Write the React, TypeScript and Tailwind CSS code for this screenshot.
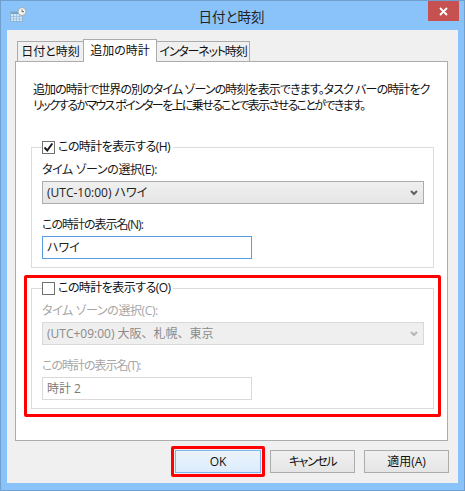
import React from 'react';

const font = "font-['Open_Sans','Noto_Sans_CJK_JP',sans-serif] [font-feature-settings:'palt']";

function CalendarClockIcon() {
  return (
    <svg width="17" height="16" viewBox="0 0 17 16" className="shrink-0">
      <rect x="0.5" y="4.5" width="12" height="10" fill="#d3e6f5" stroke="#8fb4d2" />
      <rect x="1" y="5" width="11" height="2" fill="#6fa8d6" />
      <path d="M3.5 7v7M6.5 7v7M9.5 7v7M1 9.5h11M1 12h11" stroke="#9fc3e0" strokeWidth="1" />
      <circle cx="12" cy="4.5" r="4" fill="#f2f4f6" stroke="#a3a9ae" />
      <path d="M12 2.5v2.2h2" stroke="#666" strokeWidth="1" fill="none" />
    </svg>
  );
}

function Chevron({ color }: { color: string }) {
  return (
    <svg width="8" height="6" viewBox="0 0 8 6" className="shrink-0">
      <path d="M1 1l3 3 3-3" stroke={color} strokeWidth="2" fill="none" />
    </svg>
  );
}

function ClockGroup(props: {
  checked?: boolean;
  disabled?: boolean;
  title: string;
  zoneLabel: string;
  zone: string;
  nameLabel: string;
  name: string;
}) {
  const { checked, disabled } = props;
  const labelColor = disabled ? 'text-[#a6a6a6]' : 'text-[#1a1a1a]';

  return (
    <fieldset className="border border-[#dcdcdc] h-full px-[10px] min-w-0">
      <legend className="flex items-center h-[14px] pr-[3px] bg-white">
        <span className="w-[13px] h-[13px] border border-[#707070] bg-white flex items-center justify-center">
          {checked && (
            <svg width="11" height="11" viewBox="0 0 11 11">
              <path d="M1.5 5.5l2.8 3 5-7" stroke="#1a1a1a" strokeWidth="2" fill="none" />
            </svg>
          )}
        </span>
        <span className="ml-[3px] text-[12px] tracking-[-0.55px] text-[#111] leading-[14px] whitespace-nowrap">{props.title}</span>
      </legend>
      <div className={`mt-[8px] text-[12px] tracking-[-0.4px] leading-[16px] whitespace-nowrap ${labelColor}`}>{props.zoneLabel}</div>
      <div
        className={`mt-[3px] h-[23px] w-[382px] flex items-center justify-between pl-[4px] pr-[5px] border text-[12px] ${
          disabled
            ? 'border-[#d9d9d9] bg-[#efefef] text-[#8a8a8a] [font-feature-settings:normal]'
            : 'border-[#acacac] bg-gradient-to-b from-[#f0f0f0] to-[#e5e5e5] text-[#222]'
        }`}
      >
        <span>{props.zone}</span>
        <Chevron color={disabled ? '#b5b5b5' : '#606060'} />
      </div>
      <div className={`mt-[13px] text-[12px] tracking-[-1px] leading-[16px] whitespace-nowrap ${labelColor}`}>{props.nameLabel}</div>
      <div
        className={`mt-[3px] h-[23px] w-[210px] flex items-center pl-[4px] border bg-white text-[12px] ${
          disabled ? 'border-[#d9d9d9] text-[#7a7a7a]' : 'border-[#569de5] text-[#222]'
        }`}
      >
        {props.name}
      </div>
    </fieldset>
  );
}

function DialogButton({ label, primary, wide, tight }: { label: string; primary?: boolean; wide?: boolean; tight?: boolean }) {
  return (
    <div
      className={`h-[23px] flex items-center justify-center border text-[12px] text-[#111] ${tight ? 'tracking-[-1.4px]' : ''} ${wide ? 'w-[86px]' : 'w-[85px]'} ${
        primary ? 'border-[#7eb4ea] bg-gradient-to-b from-[#ecf4fc] to-[#dcecfc]' : 'border-[#acacac] bg-gradient-to-b from-[#f0f0f0] to-[#e5e5e5]'
      }`}
    >
      {label}
    </div>
  );
}

export default function App() {
  return (
    <div className={`w-[465px] h-[491px] flex flex-col overflow-hidden bg-[#8ac3f9] border border-[#6f9fcf] ${font}`}>
      {/* Title bar */}
      <div className="h-[29px] shrink-0 flex items-start">
        <div className="ml-[9px] mt-[6px]">
          <CalendarClockIcon />
        </div>
        <div className="flex-1 text-center text-[13.5px] leading-[33px] text-[#222] pl-[8px]">日付と時刻</div>
        <div className="w-[31px] h-[20px] mr-[5px] bg-[#c75050] flex items-center justify-center">
          <svg width="9" height="9" viewBox="0 0 9 9">
            <path d="M1 1l7 7M8 1l-7 7" stroke="#fff" strokeWidth="1.8" />
          </svg>
        </div>
      </div>

      {/* Client area */}
      <div className="flex-1 mx-[6px] mb-[7px] bg-[#f0f0f0] flex flex-col px-[8px] min-h-0">
        <div className="flex items-end h-[31px] shrink-0 pl-[2px] relative z-10">
          <div className="h-[20px] w-[67px] bg-[#f0f0f0] border border-b-0 border-[#acacac] text-[12px] text-[#111] flex items-center justify-center whitespace-nowrap">
            日付と時刻
          </div>
          <div className="h-[23px] w-[74px] -ml-[1px] -mb-[1px] bg-white border border-b-0 border-[#acacac] text-[12px] text-[#111] flex items-center justify-center whitespace-nowrap">
            追加の時計
          </div>
          <div className="h-[20px] w-[94px] -ml-[1px] bg-[#f0f0f0] border border-b-0 border-[#acacac] text-[12px] tracking-[-1.2px] text-[#111] flex items-center justify-center whitespace-nowrap">
            インターネット時刻
          </div>
        </div>

        <div className="h-[380px] w-[433px] shrink-0 bg-white border border-[#acacac] flex flex-col">
          <div className="pl-[17px] pt-[20px] text-[12px] leading-[16px] text-[#111] whitespace-nowrap">
            <p className="tracking-[-0.9px]">追加の時計で世界の別のタイム ゾーンの時刻を表示できます。タスク バーの時計をク</p>
            <p className="tracking-[-1.65px]">リックするかマウス ポインターを上に乗せることで表示させることができます。</p>
          </div>
          <div className="mt-[26px] ml-[15px] w-[403px] h-[128px]">
            <ClockGroup
              checked
              title="この時計を表示する(H)"
              zoneLabel="タイム ゾーンの選択(E):"
              zone="(UTC-10:00) ハワイ"
              nameLabel="この時計の表示名(N):"
              name="ハワイ"
            />
          </div>
          <div className="mt-[7px] ml-[8px] w-[417px] h-[142px] border-[3px] border-[#ff0000] rounded-[2px] px-[4px] pt-[3px]">
            <div className="w-[403px] h-[128px]">
              <ClockGroup
                disabled
                title="この時計を表示する(O)"
                zoneLabel="タイム ゾーンの選択(C):"
                zone="(UTC+09:00) 大阪、札幌、東京"
                nameLabel="この時計の表示名(T):"
                name="時計 2"
              />
            </div>
          </div>
        </div>

        {/* Footer buttons */}
        <div className="flex items-center justify-end gap-[9px] pt-[5px] pr-[1px]">
          <div className="border-[3px] border-[#ff0000] rounded-[2px] p-[1px] -mr-[4px]">
            <DialogButton label="OK" primary wide />
          </div>
          <DialogButton label="キャンセル" tight />
          <DialogButton label="適用(A)" />
        </div>
      </div>
    </div>
  );
}
